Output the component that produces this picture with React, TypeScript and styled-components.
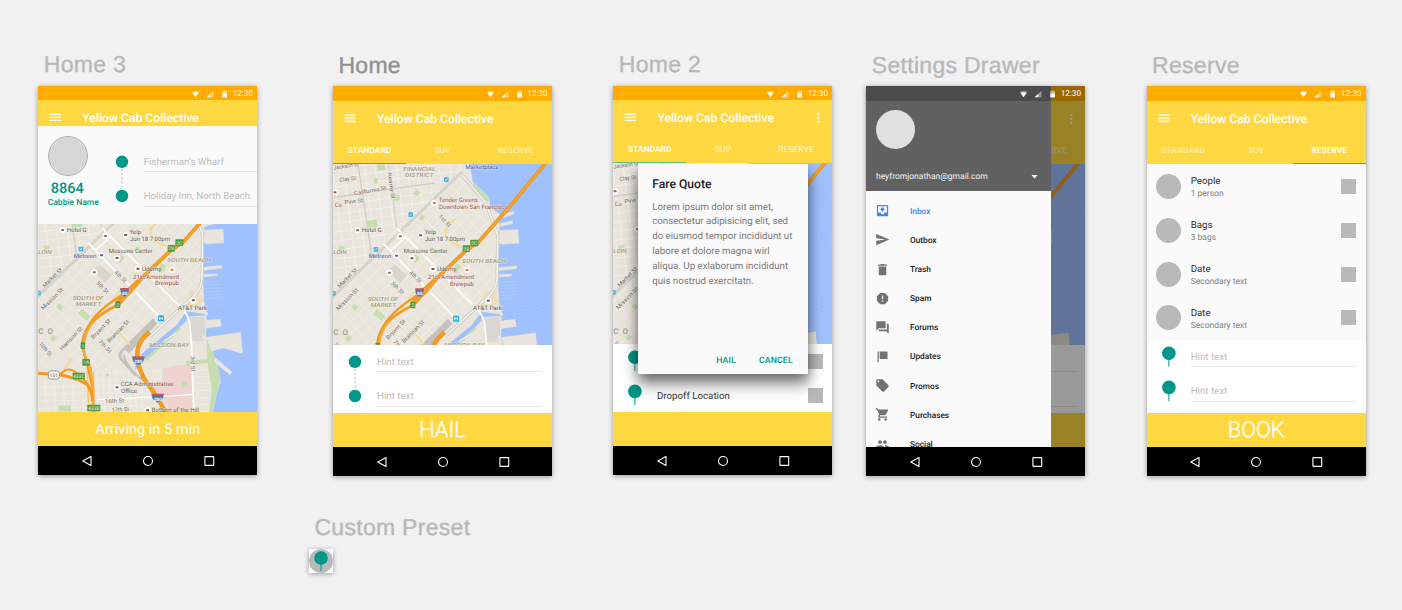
import React from "react";
import styled, { createGlobalStyle, css } from "styled-components";
import {
  MdMoveToInbox,
  MdSend,
  MdDelete,
  MdReport,
  MdForum,
  MdLocalOffer,
  MdShoppingCart,
  MdPeople,
} from "react-icons/md";

const TEAL = "#009688";
const YELLOW = "#ffd740";

const GlobalStyle = createGlobalStyle`
  *, *::before, *::after { box-sizing: border-box; }
  body {
    margin: 0;
    background: #f1f1f1;
    font-family: Roboto, "Liberation Sans", sans-serif;
    text-rendering: geometricPrecision;
  }
`;

/* ---------- canvas ---------- */

const Canvas = styled.main`
  width: 1402px;
  height: 610px;
  overflow: hidden;
  background: #f1f1f1;
`;

const BoardRow = styled.div`
  display: flex;
  padding: 50px 36px 0 38.33px;
`;

const Board = styled.section<{ $gap?: number }>`
  flex: 0 0 219px;
  margin-left: ${(p) => p.$gap ?? 0}px;
`;

const BoardTitle = styled.h2<{ $selected?: boolean; $raised?: boolean }>`
  margin: 0 0 0 5.4px;
  height: 36px;
  padding-top: ${(p) => (p.$raised ? 0 : 1)}px;
  font: 400 23px/28px "Liberation Sans", Arial, sans-serif;
  letter-spacing: 0.3px;
  white-space: nowrap;
  color: ${(p) => (p.$selected ? "#8f918f" : "#b7b8b7")};
  -webkit-text-stroke: 0.35px currentColor;
`;

const Phone = styled.div<{ $h: number }>`
  position: relative;
  display: flex;
  flex-direction: column;
  width: 219px;
  height: ${(p) => p.$h}px;
  background: #fff;
  box-shadow: 0 1px 5px rgba(0, 0, 0, 0.38);
`;

/* ---------- system bars ---------- */

const StatusRow = styled.div<{ $h: number; $bg: string; $bright?: boolean }>`
  flex: none;
  height: ${(p) => p.$h}px;
  display: flex;
  align-items: center;
  justify-content: flex-end;
  padding: 1px 4.7px 0 0;
  background: ${(p) => p.$bg};
  color: ${(p) => (p.$bright ? "#fff" : "#fff3dc")};
  font-size: 8.2px;
  line-height: 13px;
`;

const StatusIcons = styled.svg`
  width: 38px;
  height: 10px;
  margin-right: 3.5px;
`;

const Clock = styled.span`
  width: 20px;
  padding-top: 1px;
  white-space: nowrap;
`;

function StatusContent() {
  return (
    <>
      <StatusIcons viewBox="0 0 38 10">
        <path d="M0.6 3.2Q4.5 0.2 8.4 3.2L4.5 8.2Z" fill="#fff" opacity=".45" />
        <path d="M1.8 4Q4.5 2.4 7.2 4L4.5 8.2Z" fill="#fff" />
        <path d="M22.5 1.8V8.2H15.6Z" fill="#fff" opacity=".4" />
        <path d="M19.4 4.8V8.2H15.6Z" fill="#fff" />
        <path d="M31.3 2H32.6V1.2H34.6V2H36V5H31.3Z" fill="#fff" opacity=".5" />
        <path d="M31.3 4.6H36V8.4H31.3Z" fill="#fff" />
      </StatusIcons>
      <Clock>12:30</Clock>
    </>
  );
}

const NavRow = styled.div`
  flex: none;
  height: 29px;
  display: grid;
  grid-template-columns: repeat(3, 1fr);
  padding: 0 18px;
  align-items: center;
  justify-items: center;
  background: #000;
`;

const NavGlyph = styled.svg`
  width: 12px;
  height: 12px;
  fill: none;
  stroke: #fff;
  stroke-width: 1.1;
`;

function NavBar() {
  return (
    <NavRow>
      <NavGlyph viewBox="0 0 12 12">
        <path d="M1.8 6 10 1.6V10.4Z" strokeLinejoin="round" />
      </NavGlyph>
      <NavGlyph viewBox="0 0 12 12">
        <circle cx="6" cy="6" r="4.5" />
      </NavGlyph>
      <NavGlyph viewBox="0 0 12 12">
        <rect x="1.9" y="1.6" width="8.8" height="8.8" rx=".4" />
      </NavGlyph>
    </NavRow>
  );
}

/* ---------- app header ---------- */

const Header = styled.header<{ $h: number }>`
  flex: none;
  height: ${(p) => p.$h}px;
  display: flex;
  flex-direction: column;
  overflow: hidden;
  background: ${YELLOW};
`;

const TitleBar = styled.div`
  flex: none;
  height: 35px;
  display: flex;
  align-items: center;
  padding: 0 10px 0 11px;
`;

const MenuGlyph = styled.svg<{ $soft?: boolean }>`
  width: 12px;
  height: 11px;
  stroke: #fff;
  stroke-width: ${(p) => (p.$soft ? 2 : 1.15)};
  opacity: ${(p) => (p.$soft ? 0.72 : 1)};
`;

const AppTitle = styled.h1`
  margin: 0 0 0 21px;
  flex: 1;
  font-size: 12.17px;
  font-weight: 500;
  line-height: 16px;
  color: #fff;
  white-space: nowrap;
`;

const MoreGlyph = styled.svg`
  width: 8px;
  height: 12px;
  margin-left: auto;
  fill: #fff;
`;

const Tabs = styled.nav`
  flex: 1;
  display: grid;
  grid-template-columns: repeat(3, 1fr);
`;

const Tab = styled.span<{ $active?: boolean; $bar?: string }>`
  display: flex;
  align-items: center;
  justify-content: center;
  padding-top: 2px;
  font-size: 8.5px;
  font-weight: 500;
  color: ${(p) => (p.$active ? "#fff" : "rgba(255,255,255,.6)")};
  border-bottom: 1px solid ${(p) => (p.$active ? p.$bar ?? "#1fbf95" : "transparent")};
`;

type HeaderProps = {
  h: number;
  soft?: boolean;
  more?: boolean;
  active?: number;
  bar?: string;
  tabs?: string[];
  title?: string;
};

const TAB_NAMES = ["STANDARD", "SUV", "RESERVE"];

function AppHeader({
  h,
  soft,
  more,
  active = 0,
  bar,
  tabs = TAB_NAMES,
  title = "Yellow Cab Collective",
}: HeaderProps) {
  return (
    <Header $h={h}>
      <TitleBar>
        <MenuGlyph $soft={soft} viewBox="0 0 12 11">
          {soft ? (
            <path d="M.5 2H11.5M.5 5.2H11.5M.5 8.4H11.5" />
          ) : (
            <path d="M.5 2.4H11.8M.5 5.4H11.8M.5 8.4H11.8" />
          )}
        </MenuGlyph>
        {title && <AppTitle>{title}</AppTitle>}
        {more && (
          <MoreGlyph viewBox="0 0 8 12">
            <circle cx="4.3" cy="2" r="1.2" />
            <circle cx="4.3" cy="6" r="1.2" />
            <circle cx="4.3" cy="10" r="1.2" />
          </MoreGlyph>
        )}
      </TitleBar>
      {tabs.length > 0 && (
        <Tabs>
          {tabs.map((t, i) => (
            <Tab key={i} $active={i === active} $bar={bar}>
              {t}
            </Tab>
          ))}
        </Tabs>
      )}
    </Header>
  );
}

/* ---------- map ---------- */

const MapSvg = styled.svg<{ $h: number }>`
  flex: none;
  display: block;
  width: 219px;
  height: ${(p) => p.$h}px;
  background: #e9e5dc;
  font-family: Roboto, "Liberation Sans", sans-serif;
`;

type LabelSpec = [string, number, number, number, string, number?];

const placeLabels: LabelSpec[] = [
  ["Hotel G", 110, 232, 60, "#5c5853"],
  ["Yelp", 299, 237, 34, "#5c5853"],
  ["Jun 18 7:00pm", 300, 258, 120, "#5c5853"],
  ["Moscone Center", 236, 294, 132, "#5c5853"],
  ["Metreon", 131, 309, 68, "#4a549c"],
  ["Udemy", 336, 348, 58, "#5c5853"],
  ["21st Amendment", 309, 372, 139, "#9a4d48"],
  ["Brewpub", 375, 392, 72, "#9a4d48"],
  ["Tender Greens", 341, 141, 118, "#9a4d48"],
  ["Downtown San Francisco", 342, 161, 207, "#9a4d48"],
  ["Marketplace", 421, 43, 100, "#4a549c"],
  ["AT&T Park", 444, 466, 87, "#5c5853"],
  ["Co", 29, 156, 21, "#9a4d48"],
  ["CCA Administrative", 272, 695, 158, "#5c5853"],
  ["Office", 273, 714, 48, "#5c5853"],
  ["Bottom of the Hill", 365, 771, 142, "#5c5853"],
];

const streetLabels: LabelSpec[] = [
  ["Jackson St", 26, 44, 76, "#6f6b64", -8],
  ["Clay St", 44, 81, 50, "#6f6b64", -8],
  ["California St", 88, 121, 98, "#6f6b64", -10],
  ["Pine St", 59, 148, 56, "#6f6b64", -7],
  ["Kearny St", 188, 55, 78, "#6f6b64", 82],
  ["1st St", 340, 186, 44, "#6f6b64", 45],
  ["4th St", 252, 354, 44, "#6f6b64", 45],
  ["5th St", 197, 386, 46, "#6f6b64", 45],
  ["Market St", 44, 400, 76, "#6f6b64", -45],
  ["Mission St", 40, 467, 86, "#6f6b64", -45],
  ["Bryant St", 190, 554, 76, "#6f6b64", -46],
  ["Brannan St", 238, 565, 88, "#6f6b64", -46],
  ["Harrison St", 96, 588, 90, "#6f6b64", -46],
  ["7th St", 204, 562, 48, "#6f6b64", 45],
  ["10th St", 26, 568, 50, "#6f6b64", 50],
  ["3rd St", 482, 604, 46, "#6f6b64", 88],
  ["16th St", 225, 745, 58, "#6f6b64", -2],
  ["17th St", 245, 771, 52, "#6f6b64", -2],
];

const districtLabels: LabelSpec[] = [
  ["FINANCIAL", 235, 48, 96, "#a39b80"],
  ["DISTRICT", 240, 66, 86, "#a39b80"],
  ["SOUTH BEACH", 411, 323, 132, "#a39b80"],
  ["SOUTH OF", 128, 437, 93, "#a39b80"],
  ["MARKET", 137, 455, 76, "#a39b80"],
  ["MISSION BAY", 358, 577, 120, "#a39b80"],
  ["LOIN", 25, 297, 40, "#a39b80"],
];

const downtownRows = Array.from({ length: 15 }, (_, i) => 30 + i * 27);
const downtownCols = Array.from({ length: 13 }, (_, i) => 20 + i * 32);
const somaAcross = Array.from({ length: 24 }, (_, i) => -340 + i * 43);
const somaDown = Array.from({ length: 26 }, (_, i) => 230 + i * 37);
const lowerRows = Array.from({ length: 8 }, (_, i) => 650 + i * 21);
const lowerCols = Array.from({ length: 16 }, (_, i) => 200 + i * 19);

const parks: [number, number, number, number, number][] = [
  [155, 30, 24, 18, -8],
  [125, 198, 30, 22, -8],
  [145, 70, 12, 16, -8],
  [275, 103, 14, 16, 40],
  [290, 178, 14, 14, 40],
  [205, 122, 18, 16, -10],
  [40, 275, 18, 10, -8],
  [272, 298, 16, 22, 40],
  [320, 275, 22, 10, 40],
  [155, 463, 34, 18, 38],
  [88, 447, 16, 14, 40],
  [85, 753, 38, 18, 0],
  [395, 325, 16, 26, 30],
  [455, 680, 18, 18, 0],
  [228, 657, 10, 8, 0],
  [70, 540, 14, 16, 40],
];

const exits: [string, number, number, number][] = [
  ["2C", 436, 254, 24],
  ["2B", 413, 271, 22],
  ["2", 256, 440, 15],
  ["1", 152, 563, 13],
  ["1A", 157, 613, 23],
  ["433C", 128, 654, 37],
  ["433B", 172, 750, 39],
];

const shields: [string, number, number, number][] = [
  ["80", 284, 413, 26],
  ["280", 325, 618, 36],
  ["280", 383, 730, 36],
];

const pins: [number, number, string][] = [
  [98, 226, "#8d6e63"],
  [287, 241, "#795548"],
  [226, 244, "#8d6e63"],
  [261, 310, "#795548"],
  [324, 342, "#795548"],
  [193, 353, "#8d6e63"],
  [328, 144, "#ef7d32"],
  [426, 345, "#ef7d32"],
  [490, 437, "#795548"],
  [215, 302, "#5560b4"],
  [261, 698, "#795548"],
  [353, 767, "#795548"],
  [30, 112, "#b05050"],
];

const transit: [number, number][] = [
  [357, 67],
  [250, 172],
  [146, 276],
  [18, 408],
];

function MapLabel({ spec, italic, size = 18 }: { spec: LabelSpec; italic?: boolean; size?: number }) {
  const [text, x, y, w, fill, angle] = spec;
  return (
    <text
      x={x}
      y={y}
      fill={fill}
      fontSize={size}
      fontStyle={italic ? "italic" : "normal"}
      fontWeight={italic ? 500 : 400}
      textLength={w}
      lengthAdjust="spacingAndGlyphs"
      stroke="#f6f3ec"
      strokeWidth={3}
      strokeOpacity={0.6}
      paintOrder="stroke"
      transform={angle ? `rotate(${angle} ${x} ${y})` : undefined}
    >
      {text}
    </text>
  );
}

type MapProps = { id: string; top: number; height: number; labelLimit?: number };

/* labelLimit: right edge, in map units, of the strip whose texts are drawn */
function CityMap({ id, top, height, labelLimit = 700 }: MapProps) {
  const bottom = top + height * 3;
  const shown = (x: number, y: number) => x < labelLimit && y > top + 10 && y < bottom + 10;
  const visible = (s: LabelSpec) => shown(s[1], s[2]);
  return (
    <MapSvg $h={height} viewBox={`24 ${top} 657 ${height * 3}`} preserveAspectRatio="none">
      <defs>
        <clipPath id={`${id}-north`}>
          <path d="M20 20H430L400 62L24 420Z" />
        </clipPath>
        <clipPath id={`${id}-soma`}>
          <path d="M24 425L410 55L450 90L520 180V400L470 480L310 650H190L20 640Z" />
        </clipPath>
      </defs>
      <rect x="20" y="20" width="670" height="770" fill="#e9e5dc" />

      <g clipPath={`url(#${id}-north)`} stroke="#f6f3ee" strokeWidth="2">
        {downtownRows.map((y) => (
          <path key={y} d={`M20 ${y + 14}L460 ${y - 44}`} />
        ))}
        {downtownCols.map((x) => (
          <path key={x} d={`M${x} 20L${x + 56} 440`} />
        ))}
        <path d="M20 128L210 100L330 84" stroke="#cfccc6" strokeWidth="4" fill="none" />
        <path d="M98 20L140 300" stroke="#cfccc6" strokeWidth="3.5" />
        <path d="M190 20L215 220" stroke="#d8d5cf" strokeWidth="4" />
      </g>
      <g clipPath={`url(#${id}-soma)`} stroke="#f4f1eb" strokeWidth="1.8">
        {somaAcross.map((x) => (
          <path key={x} d={`M${x} 60L${x + 620} 720`} />
        ))}
        {somaDown.map((s) => (
          <path key={s} d={`M20 ${s + 180}L520 ${s - 320}`} />
        ))}
      </g>
      <g stroke="#f4f1eb" strokeWidth="1.6">
        {lowerRows.map((y) => (
          <path key={y} d={`M${y < 690 ? 200 : 24} ${y + 6}L545 ${y - 6}`} />
        ))}
        {lowerCols.map((x) => (
          <path key={x} d={`M${x} 645L${x + 6} 790`} />
        ))}
        {[45, 72, 100, 128, 155].map((x) => (
          <path key={x} d={`M${x} 670L${x + 5} 790`} />
        ))}
      </g>

      <path d="M400 640L440 632L485 628L492 790H430L400 730L360 690L395 680Z" fill="#f0d3cf" />
      <path d="M470 487H523L526 540L516 545L518 560H484Z" fill="#d9d7d2" />
      <path d="M185 345L225 385L245 360L210 330Z" fill="#d9d5cc" />
      <path d="M478 410L505 405L524 440L500 455L468 450Z" fill="#eeddbb" />
      {parks.map(([x, y, w, h, a]) => (
        <rect
          key={`${x}-${y}`}
          x={x}
          y={y}
          width={w}
          height={h}
          fill="#c6deaf"
          transform={`rotate(${a} ${x} ${y})`}
        />
      ))}
      <path d="M468 620L540 612V624L468 634Z" fill="#c6deaf" />
      <path d="M380 580L445 515L455 522L350 620L345 612Z" fill="#c6deaf" />

      {/* bay and creek */}
      <path
        d="M432 20L440 60L444 82L474 108L492 128L497 160L524 176L522 290L520 395L523 445L535 482L470 486L470 498L345 612L332 600L440 510L470 470L523 478L530 490L528 545L534 560L545 600L560 640L572 680L560 720L545 790H700V20Z"
        fill="#a0c1ff"
      />
      <path d="M318 622L326 640L314 644Z" fill="#a0c1ff" />
      <path d="M530 545L560 620L572 672L562 710L548 770L536 790L545 700L530 610Z" fill="#c6deaf" />
      <path d="M444 82L474 108L494 134L484 140L446 108Z" fill="#c6deaf" />
      <g fill="#e9e5dc" stroke="#d4d6d4" strokeWidth="1">
        <path d="M524 226L580 223L582 265L528 268L520 262Z" />
        <path d="M522 182L566 168L568 176L522 194Z" />
        <path d="M522 206L562 196L564 206L522 216Z" />
        <path d="M518 338L575 332L576 341L518 348Z" />
        <path d="M520 358L560 357V364L520 367Z" />
        <path d="M524 497L571 493L574 515L528 521Z" />
        <path d="M528 547L632 533L638 597L580 580L545 590Z" />
        <path d="M555 608L606 651L600 661L552 622Z" />
      </g>
      <g stroke="#8fb0ee" strokeWidth="1.2" strokeDasharray="9 6" fill="none">
        <path d="M528 460Q610 470 690 432" />
        <path d="M528 470Q610 480 690 446" />
        <path d="M590 60L680 190" />
        <path d="M610 60L690 170" />
        <path d="M570 130L680 290" />
      </g>
      <g stroke="#b9cdf0" strokeWidth="2">
        {[382, 392, 402, 412, 422, 432].map((y) => (
          <path key={y} d={`M526 ${y}L574 ${y - 3}`} />
        ))}
      </g>

      {/* main streets */}
      <g fill="none" stroke="#d2cfc9" strokeWidth="8">
        <path d="M20 428L412 50" stroke="#d6d3cd" strokeWidth="9" />
        <path d="M318 662L272 612Q262 598 290 575L372 495" stroke="#c4c2bf" strokeWidth="9" />
        <path d="M290 590L352 525L376 500" stroke="#c4c2bf" strokeWidth="18" />
        <path d="M280 600Q290 640 340 678" stroke="#c4c2bf" strokeWidth="6" />
        <path d="M412 60L450 105L480 140L500 190L518 240L516 370Q515 400 490 425L360 545" stroke="#c6c5c3" strokeWidth="9" />
        <path d="M412 60L450 105L480 140L500 190L518 240L516 370Q515 400 490 425L360 545" stroke="#f4f2ed" strokeWidth="5" />
      </g>
      <g fill="none" stroke="#fdfdfb" strokeWidth="5.5">
        <path d="M175 265L392 490" />
        <path d="M216 220L440 446Q470 470 478 500L484 560L492 790" />
        <path d="M196 287L244 245" />
        <path d="M400 560L440 535" strokeWidth="3" />
        <path d="M200 735L490 720" strokeWidth="4" />
      </g>
      <g fill="none" stroke="#f6d790" strokeWidth="5">
        <path d="M395 190Q360 210 362 245Q385 270 410 274" />
        <path d="M378 205L355 228" />
        <path d="M250 430L275 405" />
        <path d="M268 535L300 570" />
        <path d="M172 640L176 770M190 650L192 770" stroke="#f7c869" />
        <path d="M102 645L120 620V610" />
      </g>

      {/* freeways */}
      <g fill="none" strokeLinejoin="round" strokeLinecap="butt">
        <path d="M665 20L550 160L460 262L425 285L340 365L300 412L262 442" stroke="#d98f2c" strokeWidth="11" />
        <path d="M665 20L550 160L460 262L425 285L340 365L300 412L262 442" stroke="#f9a025" strokeWidth="8" />
        <path d="M340 362L270 425Q200 470 178 510Q155 545 158 580L172 630L188 700L190 790" stroke="#f39a1f" strokeWidth="7" />
        <path d="M300 412L268 448Q205 480 186 505Q160 530 157 570L170 625" stroke="#f39a1f" strokeWidth="8" />
        <path d="M190 500Q166 535 164 560L160 590L182 640L190 700V790" stroke="#f7ab3c" strokeWidth="6" />
        <path d="M24 656L90 660Q150 672 172 690Q186 705 188 740" stroke="#f39a1f" strokeWidth="9" />
        <path d="M92 658Q115 632 140 655Q172 676 180 710" stroke="#f39a1f" strokeWidth="6" />
        <path d="M358 532L338 552Q322 572 322 600Q322 640 350 684Q385 728 415 790" stroke="#d98f2c" strokeWidth="13" />
        <path d="M358 532L338 552Q322 572 322 600Q322 640 350 684Q385 728 415 790" stroke="#f99c1c" strokeWidth="11" />
      </g>

      {streetLabels.filter(visible).map((s) => (
        <MapLabel key={s[0]} spec={s} size={17} />
      ))}
      {districtLabels.filter(visible).map((s) => (
        <MapLabel key={s[0]} spec={s} italic size={17} />
      ))}
      {shown(24, 539) && (
        <text x="25" y="539" fontSize="24" fontWeight="500" fill="#a39b80" textLength="44">
          C O
        </text>
      )}

      {pins.map(([x, y, c]) => (
        <g key={`${x}-${y}`}>
          <circle cx={x} cy={y} r="10.5" fill="#fff" stroke="#d6d1c9" strokeWidth="1" />
          <rect x={x - 4.5} y={y - 3} width="9" height="6" rx="1" fill={c} />
        </g>
      ))}
      {transit.map(([x, y]) => (
        <g key={`${x}-${y}`}>
          <rect x={x} y={y} width="14" height="14" rx="2" fill="#4fb3dd" />
          <path d={`M${x + 4} ${y + 10}L${x + 10} ${y + 4}`} stroke="#fff" strokeWidth="2.5" />
        </g>
      ))}
      <rect x="384" y="482" width="18" height="18" rx="2" fill="#1fb0ea" />
      <path d="M389 486V496M397 486V496M389 491H397" stroke="#fff" strokeWidth="2.5" />

      {exits
        .filter(([, x, y]) => shown(x, y + 6))
        .map(([t, x, y, w]) => (
          <g key={t}>
            <rect x={x} y={y} width={w} height="20" rx="2" fill="#4d9a3a" />
            <text x={x + w / 2} y={y + 15.5} fontSize="15" fill="#e9f5e4" textAnchor="middle">
              {t}
            </text>
          </g>
        ))}
      {shields
        .filter(([, x, y]) => shown(x, y))
        .map(([t, x, y, w]) => (
          <g key={`${t}${y}`}>
            <path
              d={`M${x - w / 2} ${y - 12}H${x + w / 2}Q${x + w / 2 + 2} ${y + 6} ${x} ${y + 14}Q${x - w / 2 - 2} ${y + 6} ${x - w / 2} ${y - 12}Z`}
              fill="#4c74b8"
              stroke="#dfe4ee"
              strokeWidth="1"
            />
            <rect x={x - w / 2} y={y - 13} width={w} height="6" fill="#d2564d" />
            <text x={x} y={y + 8} fontSize="14" fontWeight="700" fill="#fff" textAnchor="middle">
              {t}
            </text>
          </g>
        ))}
      {shown(55, 660) && (
        <g>
          <rect x="55" y="649" width="33" height="24" rx="8" fill="#fff" stroke="#6b6b6b" strokeWidth="2" />
          <text x="71.5" y="667" fontSize="15" fill="#444" textAnchor="middle">
            101
          </text>
        </g>
      )}
      {placeLabels.filter(visible).map((s) => (
        <MapLabel key={s[0]} spec={s} />
      ))}
    </MapSvg>
  );
}

/* ---------- shared pieces ---------- */

const ActionBar = styled.div<{ $size?: number; $light?: boolean }>`
  flex: none;
  height: 34px;
  display: flex;
  align-items: center;
  justify-content: center;
  background: ${YELLOW};
  color: #fff;
  font-size: ${(p) => p.$size ?? 21.9}px;
  font-weight: ${(p) => (p.$light ? 300 : 400)};
  -webkit-text-stroke: ${(p) => (p.$light ? 0.35 : 0)}px #fff;
  white-space: nowrap;
`;

const RouteForm = styled.div`
  flex: none;
  display: flex;
  height: 68px;
  padding-left: 14px;
  background: #fff;
`;

const Markers = styled.svg`
  flex: none;
  width: 16px;
  height: 68px;
`;

const Fields = styled.div<{ $ml?: number; $mr?: number }>`
  flex: 1;
  margin-left: ${(p) => p.$ml ?? 14}px;
  margin-right: ${(p) => p.$mr ?? 9.8}px;
`;

const Field = styled.div`
  height: 20px;
  margin-top: 7px;
  border-bottom: 1px solid #e6e6e6;
  font-size: 9.73px;
  line-height: 22px;
  color: #bcbcbc;
  white-space: nowrap;
  & + & {
    margin-top: 14px;
    height: 20.5px;
  }
`;

function RouteMarkers() {
  return (
    <Markers viewBox="0 0 16 68">
      <path d="M8 24V44" stroke="#c8c8c8" strokeWidth="1.6" strokeDasharray="1.8 2.4" />
      <circle cx="8" cy="16.8" r="6.2" fill={TEAL} />
      <circle cx="8" cy="51" r="6.2" fill={TEAL} />
    </Markers>
  );
}

function PinMarkers() {
  return (
    <Markers viewBox="0 0 16 68" fill={TEAL}>
      <path d="M7.4 14H8.4V26.8H7.4ZM7.4 48H8.4V61H7.4Z" />
      <circle cx="7.9" cy="13.3" r="6.8" />
      <circle cx="7.9" cy="47.4" r="6.8" />
    </Markers>
  );
}

const Square = styled.span`
  flex: none;
  width: 15px;
  height: 15px;
  margin-left: auto;
  background: #b9b9b9;
`;

/* ---------- driver card ---------- */

const DriverCard = styled.div`
  flex: none;
  height: 98px;
  display: flex;
  background: #fafafa;
`;

const Driver = styled.div`
  flex: none;
  width: 75.3px;
  padding: 10px 0 0 9.4px;
  color: ${TEAL};
  font-weight: 500;
`;

const DriverPhoto = styled.div`
  width: 40px;
  height: 40px;
  border-radius: 50%;
  border: 1px solid #b2b2b2;
  background: #d7d7d7;
`;

const CabNumber = styled.div`
  margin: 4px 0 0 3px;
  font-size: 14.6px;
  line-height: 16px;
`;

const CabbieName = styled.div`
  margin-top: 2px;
  font-size: 8.5px;
  line-height: 11px;
  white-space: nowrap;
`;

const DriverRoute = styled.div`
  flex: 1;
  display: flex;
  padding-top: 19px;
`;

/* ---------- fare dialog ---------- */

const Dialog = styled.div`
  position: absolute;
  left: 25px;
  top: 78px;
  width: 170px;
  height: 210px;
  display: flex;
  flex-direction: column;
  padding: 12px 14px 5px 13.8px;
  background: #fafafa;
  box-shadow: 0 10px 14px rgba(0, 0, 0, 0.5), 0 2px 10px rgba(0, 0, 0, 0.2);
  clip-path: inset(0 -30px -40px -30px);
`;

const DialogTitle = styled.h3`
  margin: 0;
  font-size: 12.17px;
  line-height: 16px;
  font-weight: 500;
  color: #212121;
`;

const DialogText = styled.p`
  margin: 8.7px 0 0;
  flex: 1;
  font-size: 9.73px;
  line-height: 14.8px;
  color: #787878;
  white-space: pre;
`;

const DialogActions = styled.div`
  display: flex;
  justify-content: flex-end;
  gap: 23px;
  padding-right: 1.6px;
  font-size: 8.7px;
  line-height: 16px;
  font-weight: 500;
  letter-spacing: 0.15px;
  color: ${TEAL};
`;

const PlaceRows = styled.div`
  flex: none;
  height: 68px;
  display: flex;
  padding-left: 14px;
  background: #fff;
`;

const PlaceList = styled.div`
  flex: 1;
  padding: 0 9.5px 0 13.6px;
`;

const PlaceRow = styled.div`
  height: 34px;
  display: flex;
  align-items: center;
  font-size: 9.73px;
  color: #333;
`;

const PlaceName = styled.span`
  padding-top: 2px;
`;

/* ---------- drawer ---------- */

const Scrim = styled.div`
  position: absolute;
  inset: 0 0 29px 0;
  background: rgba(0, 0, 0, 0.4);
`;

const Drawer = styled.aside`
  position: absolute;
  left: 0;
  top: 0;
  width: 185px;
  height: 361px;
  overflow: hidden;
  background: #fafafa;
`;

const DrawerHead = styled.div`
  height: 105px;
  display: flex;
  flex-direction: column;
  background: #616161;
  border-top: 15px solid #4c4c4c;
  padding: 9px 13px 0 9.6px;
`;

const Avatar = styled.div`
  width: 39px;
  height: 39px;
  border-radius: 50%;
  background: #e0e0e0;
`;

const Account = styled.div`
  display: flex;
  align-items: center;
  justify-content: space-between;
  margin-top: 19.5px;
  font-size: 8.5px;
  line-height: 16px;
  color: #f2f2f2;
`;

const Caret = styled.svg`
  width: 7px;
  height: 4px;
  fill: #fff;
`;

const DrawerList = styled.ul`
  list-style: none;
  margin: 0;
  padding: 5.2px 0 0 9px;
`;

const DrawerItem = styled.li<{ $active?: boolean }>`
  height: 29.17px;
  display: flex;
  align-items: center;
  gap: 19.6px;
  font-size: 8.3px;
  font-weight: 500;
  color: #212121;
  svg {
    width: 15px;
    height: 15px;
    color: #727272;
  }
  ${(p) =>
    p.$active &&
    css`
      color: #4285f4;
      svg {
        color: #4285f4;
      }
    `}
`;

const DrawerLabel = styled.span`
  padding-top: 1.9px;
`;

const FlagSquare = () => (
  <svg viewBox="0 0 24 24" fill="currentColor">
    <path d="M4 4H6V21H4ZM7.5 4H20V16H7.5Z" />
  </svg>
);

const drawerItems: [string, React.ComponentType][] = [
  ["Inbox", MdMoveToInbox],
  ["Outbox", MdSend],
  ["Trash", MdDelete],
  ["Spam", MdReport],
  ["Forums", MdForum],
  ["Updates", FlagSquare],
  ["Promos", MdLocalOffer],
  ["Purchases", MdShoppingCart],
  ["Social", MdPeople],
];

const OverlayStatus = styled.div`
  position: absolute;
  left: 0;
  right: 0;
  top: 0;
`;

/* ---------- reserve list ---------- */

const ReserveList = styled.div`
  flex: none;
  height: 176px;
  padding-top: 0.3px;
  background: #fafafa;
`;

const ReserveRow = styled.div`
  height: 43.9px;
  display: flex;
  align-items: center;
  padding: 0 9.5px 0 9px;
`;

const Dot = styled.span`
  width: 25px;
  height: 25px;
  border-radius: 50%;
  background: #b9b9b9;
`;

const RowText = styled.div`
  flex: 1;
  margin-left: 10px;
  padding-top: 3.3px;
  font-size: 9.73px;
  line-height: 12px;
  color: #303030;
`;

const RowNote = styled.div`
  font-size: 8.5px;
  color: #808080;
`;

const FormFoot = styled.div`
  flex: none;
  height: 5px;
  background: #fafafa;
`;

/* ---------- preset ---------- */

const Preset = styled.section`
  margin: 36px 0 0 309px;
`;

const PresetTile = styled.div`
  width: 24px;
  height: 24px;
  margin-top: 1px;
  background: #fff;
  box-shadow: 0 1px 5px rgba(0, 0, 0, 0.35);
  svg {
    display: block;
  }
`;

export default function App() {
  return (
    <Canvas>
      <GlobalStyle />
      <BoardRow>
        <Board>
          <BoardTitle $raised>Home 3</BoardTitle>
          <Phone $h={389}>
            <StatusRow $h={14} $bg="#ffab00">
              <StatusContent />
            </StatusRow>
            <AppHeader h={26} tabs={[]} />
            <DriverCard>
              <Driver>
                <DriverPhoto />
                <CabNumber>8864</CabNumber>
                <CabbieName>Cabbie Name</CabbieName>
              </Driver>
              <DriverRoute>
                <RouteMarkers />
                <Fields $ml={14} $mr={0}>
                  <Field>Fisherman’s Wharf</Field>
                  <Field>Holiday Inn, North Beach</Field>
                </Fields>
              </DriverRoute>
            </DriverCard>
            <CityMap id="arriving" top={208} height={188} />
            <ActionBar $size={14.6}>Arriving in 5 min</ActionBar>
            <NavBar />
          </Phone>
        </Board>

        <Board $gap={75.7}>
          <BoardTitle $selected>Home</BoardTitle>
          <Phone $h={390}>
            <StatusRow $h={15} $bg="#ffab00">
              <StatusContent />
            </StatusRow>
            <AppHeader h={63} soft />
            <CityMap id="home" top={27} height={181} />
            <RouteForm>
              <RouteMarkers />
              <Fields>
                <Field>Hint text</Field>
                <Field>Hint text</Field>
              </Fields>
            </RouteForm>
            <ActionBar $light>HAIL</ActionBar>
            <NavBar />
          </Phone>
        </Board>

        <Board $gap={61.37}>
          <BoardTitle $raised>Home 2</BoardTitle>
          <Phone $h={389}>
            <StatusRow $h={14} $bg="#ffab00">
              <StatusContent />
            </StatusRow>
            <AppHeader h={63} more bar="#5ec57c" />
            <CityMap id="quote" top={27} height={181} labelLimit={80} />
            <PlaceRows>
              <PinMarkers />
              <PlaceList>
                <PlaceRow>
                  <Square />
                </PlaceRow>
                <PlaceRow>
                  <PlaceName>Dropoff Location</PlaceName>
                  <Square />
                </PlaceRow>
              </PlaceList>
            </PlaceRows>
            <ActionBar />
            <NavBar />
            <Dialog>
              <DialogTitle>Fare Quote</DialogTitle>
              <DialogText>
                {
                  "Lorem ipsum dolor sit amet,\nconsectetur adipisicing elit, sed\ndo eiusmod tempor incididunt ut\nlabore et dolore magna wirl\naliqua. Up exlaborum incididunt\nquis nostrud exercitatn."
                }
              </DialogText>
              <DialogActions>
                <span>HAIL</span>
                <span>CANCEL</span>
              </DialogActions>
            </Dialog>
          </Phone>
        </Board>

        <Board $gap={34}>
          <BoardTitle>Settings Drawer</BoardTitle>
          <Phone $h={390}>
            <StatusRow $h={15} $bg="#ffab00" />
            <AppHeader h={63} more title="" tabs={["", "", "RESERVE"]} />
            <CityMap id="drawer" top={27} height={181} labelLimit={0} />
            <RouteForm>
              <RouteMarkers />
              <Fields>
                <Field />
                <Field />
              </Fields>
            </RouteForm>
            <ActionBar />
            <NavBar />
            <Scrim />
            <Drawer>
              <DrawerHead>
                <Avatar />
                <Account>
                  heyfromjonathan@gmail.com
                  <Caret viewBox="0 0 7 4">
                    <path d="M.5 0H6.5L3.5 3.4Z" />
                  </Caret>
                </Account>
              </DrawerHead>
              <DrawerList>
                {drawerItems.map(([label, Icon], i) => (
                  <DrawerItem key={label} $active={i === 0}>
                    <Icon />
                    <DrawerLabel>{label}</DrawerLabel>
                  </DrawerItem>
                ))}
              </DrawerList>
            </Drawer>
            <OverlayStatus>
              <StatusRow $h={15} $bg="transparent" $bright>
                <StatusContent />
              </StatusRow>
            </OverlayStatus>
          </Phone>
        </Board>

        <Board $gap={61.3}>
          <BoardTitle>Reserve</BoardTitle>
          <Phone $h={390}>
            <StatusRow $h={15} $bg="#ffab00">
              <StatusContent />
            </StatusRow>
            <AppHeader h={63} soft active={2} />
            <ReserveList>
              {[
                ["People", "1 person"],
                ["Bags", "3 bags"],
                ["Date", "Secondary text"],
                ["Date", "Secondary text"],
              ].map(([title, note], i) => (
                <ReserveRow key={i}>
                  <Dot />
                  <RowText>
                    {title}
                    <RowNote>{note}</RowNote>
                  </RowText>
                  <Square />
                </ReserveRow>
              ))}
            </ReserveList>
            <RouteForm>
              <PinMarkers />
              <Fields>
                <Field>Hint text</Field>
                <Field>Hint text</Field>
              </Fields>
            </RouteForm>
            <FormFoot />
            <ActionBar $light>BOOK</ActionBar>
            <NavBar />
          </Phone>
        </Board>
      </BoardRow>

      <Preset>
        <BoardTitle>Custom Preset</BoardTitle>
        <PresetTile>
          <svg width="24" height="24" viewBox="0 0 24 24">
            <circle cx="12" cy="12" r="12" fill="#b9b9b9" />
            <path d="M11.5 12H12.5V22H11.5Z" fill={TEAL} />
            <circle cx="12" cy="9" r="6.8" fill={TEAL} />
          </svg>
        </PresetTile>
      </Preset>
    </Canvas>
  );
}
